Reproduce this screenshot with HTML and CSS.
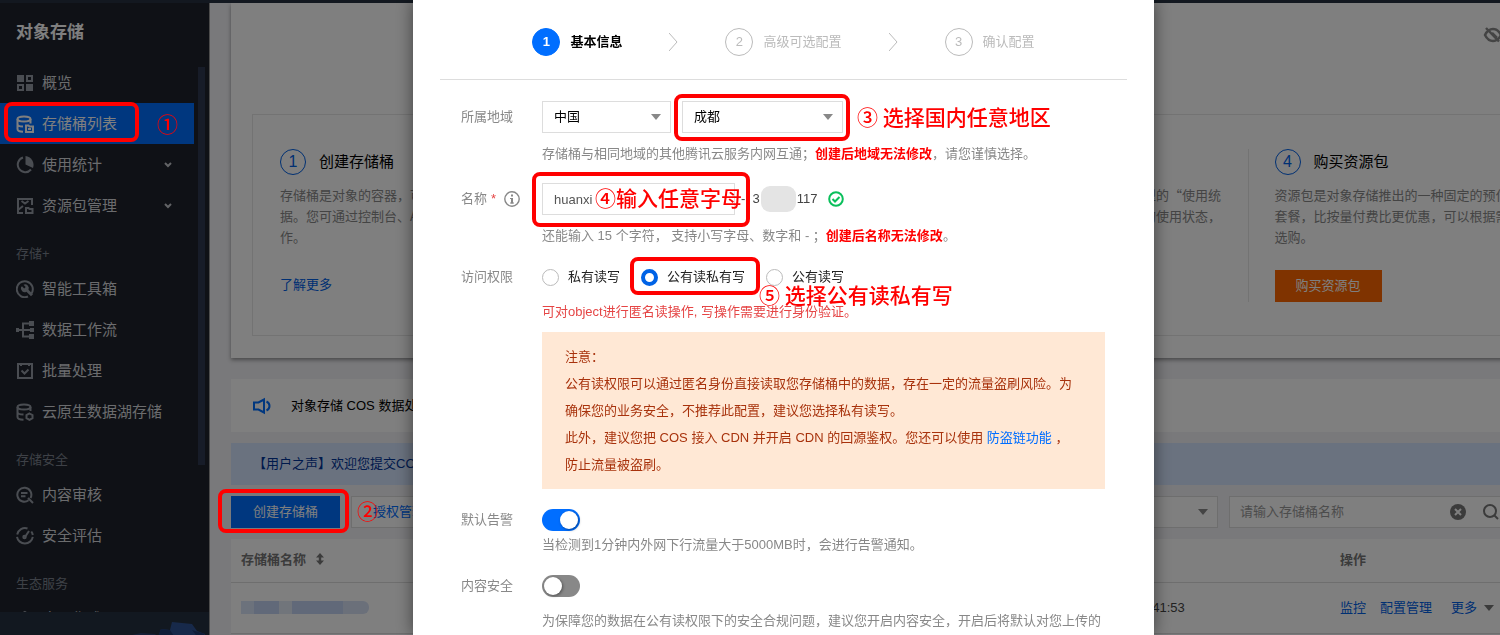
FILE: index.html
```html
<!DOCTYPE html>
<html lang="zh-CN">
<head>
	<meta charset="UTF-8">
	<title>对象存储</title>
	<link rel="stylesheet" href="styles.css">
</head>
<body>
	<div class="topbar"></div>
	<div class="layout">
		<nav class="sidebar">
			<h1 class="sidebar-title">对象存储</h1>
			<div class="sidebar-scroll"></div>
			<ul class="menu">
				<li><a class="menu-item" href="#">
					<svg class="icon" viewBox="0 0 18 18"><path fill="currentColor" fill-rule="evenodd" d="M1 1h7v7H1zM10 1h7v7h-7zM12 3v3h3V3zM1 10h7v7H1zM3 12v3h3v-3zM10 10h7v7h-7z"/></svg>
					概览</a></li>
				<li><a class="menu-item active" href="#">
					<svg class="icon" viewBox="0 0 18 18" fill="none" stroke="currentColor" stroke-width="2"><ellipse cx="8" cy="4" rx="6.5" ry="2.6"/><path d="M1.500 4v10c0 1.600 2 2.600 5.500 2.700M1.500 9c0 1.500 2 2.500 5.500 2.600M14.500 4v4.500M10 10.500h2.500l1 1h3.500v5.500h-7zM12 14h3"/></svg>
					存储桶列表</a></li>
				<li><a class="menu-item" href="#">
					<svg class="icon" viewBox="0 0 18 18"><path fill="none" stroke="currentColor" stroke-width="2" d="M7 1.500A7.500 7.500 0 1 0 15 13.500"/><path fill="currentColor" d="M9.500 0A9 9 0 0 1 17 12L9.500 8.500z"/></svg>
					使用统计<svg class="arrow" viewBox="0 0 8 6"><path d="M1 1l3 3 3-3"/></svg></a></li>
				<li><a class="menu-item" href="#">
					<svg class="icon" viewBox="0 0 18 18" fill="none" stroke="currentColor" stroke-width="2"><path d="M7 16H2V2h14v6M5.500 4l3.500 2.500L12.500 4M2 13l5-4M10 11h2.500l1 1H16.500V16H10z"/></svg>
					资源包管理<svg class="arrow" viewBox="0 0 8 6"><path d="M1 1l3 3 3-3"/></svg></a></li>
				<li class="menu-group">存储+</li>
				<li><a class="menu-item" href="#">
					<svg class="icon" viewBox="0 0 18 18"><path fill="none" stroke="currentColor" stroke-width="2" d="M15.500 13.500A8 8 0 1 0 12 16.500"/><path fill="currentColor" d="M6 6.200l2.200 2.200 1.500-1.500L7.500 4.700a3.800 3.800 0 0 1 5 5l4.500 4.500-2 2-4.600-4.400A3.800 3.800 0 0 1 5 7.300z"/></svg>
					智能工具箱</a></li>
				<li><a class="menu-item" href="#">
					<svg class="icon" viewBox="0 0 18 18"><path fill="none" stroke="currentColor" stroke-width="2" d="M1 9h15M14 2.500H7v13h7"/><path fill="currentColor" d="M0 7h3v4H0zM13 0h5v5h-5zM14 7h4v4h-4zM13 13h5v5h-5z"/></svg>
					数据工作流</a></li>
				<li><a class="menu-item" href="#">
					<svg class="icon" viewBox="0 0 18 18" fill="none" stroke="currentColor" stroke-width="2"><path d="M2 2h14v14H2zM5.500 8.500l3 3 4-4M5 2v2M13 2v2"/></svg>
					批量处理</a></li>
				<li><a class="menu-item" href="#">
					<svg class="icon" viewBox="0 0 18 18" fill="none" stroke="currentColor" stroke-width="2"><ellipse cx="8" cy="4" rx="6.500" ry="2.600"/><path d="M1.500 4v10c0 1.600 2 2.600 6 2.700M1.500 9c0 1.500 2 2.500 6 2.600M14.500 4v4"/><path d="M13.500 10.500l3 1.700v3l-3 1.700-3-1.700v-3z"/></svg>
					云原生数据湖存储</a></li>
				<li class="menu-group">存储安全</li>
				<li><a class="menu-item" href="#">
					<svg class="icon" viewBox="0 0 18 18" fill="none" stroke="currentColor" stroke-width="2"><path d="M12.500 14.300A7 7 0 1 1 14.500 12M12 12l5 5M5 7h6.500M5 10.200h4.500"/></svg>
					内容审核</a></li>
				<li><a class="menu-item" href="#">
					<svg class="icon" viewBox="0 0 18 18" fill="none" stroke="currentColor" stroke-width="2"><path d="M11.500 1.500A8 8 0 0 0 1.200 7.500M1 9.800a8 8 0 0 0 15.800 0M16.800 8a8 8 0 0 0-1.500-3.500"/><path d="M9 10l4-6"/><circle cx="8.500" cy="10" r="1.200"/></svg>
					安全评估</a></li>
				<li class="menu-group">生态服务</li>
				<li><a class="menu-item" href="#">
					<svg class="icon" viewBox="0 0 18 18" fill="none" stroke="currentColor" stroke-width="2"><path d="M9 2l7 4-7 4-7-4zM2 11l7 4 7-4"/></svg>
					应用集成</a></li>
			</ul>
			<div class="sidebar-promo">
				<svg viewBox="0 0 78 24"><path fill="#2c4170" d="M2 14l9-2 14 1 4 4H0z"/><path fill="#2f5394" d="M28 16l3-8 9 1 2-8 20 2 5 7 8 3-1 5z"/><path fill="#1f3a70" d="M31 8l9 1 6 9H27zM62 9l13 4-6 5z"/></svg>
			</div>
		</nav>

		<main class="main">
			<div class="content">
				<section class="guide">
					<svg class="eye" viewBox="0 0 20 16" fill="none" stroke="currentColor" stroke-width="2.500"><path d="M2 8c2-4 5-6 8-6s6 2 8 6c-2 4-5 6-8 6s-6-2-8-6z"/><path d="M9 6l5 5M3 1l13 13.500"/></svg>
					<div class="guide-steps">
						<div class="guide-step">
							<h3><i>1</i>创建存储桶</h3>
							<p>存储桶是对象的容器，可以存放任意数量数<br>据。您可通过控制台、API 等多种方式操<br>作。</p>
							<a class="link" href="#">了解更多</a>
						</div>
						<div class="guide-step">
							<h3><i>2</i>上传对象</h3>
							<p>您可将文件或文件夹上传到存储桶中。</p>
							<a class="link" href="#">了解更多</a>
						</div>
						<div class="guide-step">
							<h3><i>3</i>查看统计数据</h3>
							<p>对象存储 COS 控制台提供了多种类型的“使用统<br>计”功能，您可以随时了解到 COS 的使用状态，</p>
							<a class="link" href="#">了解更多</a>
						</div>
						<div class="guide-step">
							<h3><i>4</i>购买资源包</h3>
							<p>资源包是对象存储推出的一种固定的预付费<br>套餐，比按量付费比更优惠，可以根据需要<br>选购。</p>
							<button class="btn-buy" type="button">购买资源包</button>
						</div>
					</div>
				</section>

				<section class="news">
					<svg class="speaker" viewBox="0 0 18 16" fill="none" stroke="currentColor" stroke-width="2"><path d="M1 4.500h4.500L11 1.500v13l-5.500-3H1z"/><path d="M13.500 3.500c4 2 4 7 0 9"/></svg>
					对象存储 COS 数据处理能力全新升级
				</section>
				<section class="voice">【用户之声】欢迎您提交COS产品的意见与建议</section>

				<div class="toolbar">
					<button class="btn btn-primary" type="button">创建存储桶</button>
					<button class="btn" type="button">授权管理</button>
					<select class="select filter" aria-label="筛选条件"><option></option></select>
					<div class="search">
						<input type="text" placeholder="请输入存储桶名称" aria-label="请输入存储桶名称">
						<svg viewBox="0 0 16 16"><circle cx="8" cy="8" r="8" fill="currentColor"/><path d="M5 5l6 6M11 5l-6 6" stroke="#fff" stroke-width="2"/></svg>
						<svg viewBox="0 0 16 16" fill="none" stroke="currentColor" stroke-width="2"><circle cx="7" cy="7" r="6"/><path d="M11 11l4 4"/></svg>
					</div>
				</div>

				<table class="table">
					<thead>
						<tr>
							<th class="col-name">存储桶名称<svg class="sort" viewBox="0 0 8 12"><path fill="currentColor" d="M4 0l4 4.500H5.200v3H8L4 12 0 7.500h2.800v-3H0z"/></svg></th>
							<th class="col-region">所属地域</th>
							<th class="col-time">创建时间</th>
							<th>操作</th>
						</tr>
					</thead>
					<tbody>
						<tr>
							<td><span class="mask"></span></td>
							<td>成都</td>
							<td>2023-06-01 10:41:53</td>
							<td><div class="actions"><a class="link" href="#">监控</a><a class="link" href="#">配置管理</a><a class="link more" href="#">更多</a></div></td>
						</tr>
					</tbody>
				</table>
			</div>
		</main>
	</div>

	<div class="overlay">
		<div class="dialog" role="dialog" aria-label="创建存储桶">
			<ol class="steps">
				<li class="step current"><i>1</i>基本信息</li>
				<li class="step-arrow"><svg viewBox="0 0 9 18"><path d="M0 0l8 9-8 9"/></svg></li>
				<li class="step"><i>2</i>高级可选配置</li>
				<li class="step-arrow"><svg viewBox="0 0 9 18"><path d="M0 0l8 9-8 9"/></svg></li>
				<li class="step"><i>3</i>确认配置</li>
			</ol>

			<form class="form">
				<div class="form-row">
					<label class="form-label" for="area">所属地域</label>
					<div>
						<div class="controls region">
							<select class="select country" id="area"><option>中国</option></select>
							<select class="select city" aria-label="城市"><option>成都</option></select>
							<span class="mark mark-city"></span>
							<span class="note note-city">③ 选择国内任意地区</span>
						</div>
						<p class="help">存储桶与相同地域的其他腾讯云服务内网互通；<strong>创建后地域无法修改</strong>，请您谨慎选择。</p>
					</div>
				</div>

				<div class="form-row">
					<label class="form-label" for="name">名称 <em>*</em>
						<svg class="info" viewBox="0 0 16 16" fill="none" stroke="currentColor"><circle cx="8" cy="8" r="7.200" stroke-width="1.400"/><path stroke-width="2" d="M8 3.500v2M8 7v5.500"/><path d="M6 7.500h2M6 12h4"/></svg>
					</label>
					<div>
						<div class="controls name">
							<input class="input" id="name" type="text" value="huanxi">
							<span class="appid">- &nbsp;3<b></b>117</span>
							<svg class="ok" viewBox="0 0 16 16" fill="none" stroke="currentColor" stroke-width="2"><circle cx="8" cy="8" r="6.800"/><path d="M4.500 8l2.500 2.500 4.500-4.500"/></svg>
							<span class="mark mark-name"></span>
							<span class="note note-name">④输入任意字母</span>
						</div>
						<p class="help">还能输入 15 个字符， 支持小写字母、数字和 - ；<strong>创建后名称无法修改</strong>。</p>
					</div>
				</div>

				<div class="form-row compact">
					<span class="form-label" id="acl">访问权限</span>
					<div>
						<div class="controls radios" role="radiogroup" aria-labelledby="acl">
							<label><input type="radio" name="acl">私有读写</label>
							<label><input type="radio" name="acl" checked>公有读私有写</label>
							<label><input type="radio" name="acl">公有读写</label>
							<span class="mark mark-acl"></span>
							<span class="note note-acl">⑤ 选择公有读私有写</span>
						</div>
						<p class="error">可对object进行匿名读操作, 写操作需要进行身份验证。</p>
						<div class="notice">
							<p>注意：</p>
							<p>公有读权限可以通过匿名身份直接读取您存储桶中的数据，存在一定的流量盗刷风险。为确保您的业务安全，不推荐此配置，建议您选择私有读写。</p>
							<p>此外，建议您把 COS 接入 CDN 并开启 CDN 的回源鉴权。您还可以使用 <a href="#">防盗链功能</a> ，<br>防止流量被盗刷。</p>
						</div>
					</div>
				</div>

				<div class="form-row compact">
					<label class="form-label" for="alarm">默认告警</label>
					<div>
						<div class="controls"><input class="switch" id="alarm" type="checkbox" checked></div>
						<p class="help tight">当检测到1分钟内外网下行流量大于5000MB时，会进行告警通知。</p>
					</div>
				</div>

				<div class="form-row compact">
					<label class="form-label" for="safe">内容安全</label>
					<div>
						<div class="controls"><input class="switch" id="safe" type="checkbox"></div>
						<p class="help">为保障您的数据在公有读权限下的安全合规问题，建议您开启内容安全，开启后将默认对您上传的</p>
					</div>
				</div>
			</form>
		</div>
	</div>

	<!-- 操作步骤标注 -->
	<span class="mark mark-list"></span>
	<span class="note note-list">①</span>
	<span class="mark mark-create"></span>
	<span class="note note-create">②</span>
</body>
</html>
```
FILE: styles.css
```css
* {
	box-sizing: border-box;
}
body {
	margin: 0;
	height: 100vh;
	overflow: hidden;
	display: flex;
	flex-direction: column;
	position: relative;
	font: 13px/20px "Liberation Sans", "Noto Sans CJK SC", sans-serif;
	color: #000;
}
h1, h3, p, ul, ol {
	margin: 0;
	padding: 0;
}
li {
	list-style: none;
}
i, em {
	font-style: normal;
}
a {
	text-decoration: none;
}
input, select, button {
	font: inherit;
	color: inherit;
	margin: 0;
}
.link {
	color: #0060e6;
}
.topbar {
	flex: none;
	height: 3px;
	background: #263140;
}
.layout {
	flex: 1;
	min-height: 0;
	display: flex;
}

/* 左侧导航 */
.sidebar {
	position: relative;
	flex: none;
	width: 210px;
	overflow: hidden;
	background: #1e222c;
	border-right: 1px solid #999;
}
.sidebar-title {
	padding: 16px 16px 15px;
	font-size: 17px;
	line-height: 28px;
	color: #fff;
}
.sidebar-scroll {
	position: absolute;
	top: 64px;
	right: 4px;
	width: 7px;
	height: 398px;
	background: #2f3850;
}
.menu-item {
	display: flex;
	align-items: center;
	width: 194px;
	height: 41px;
	padding-left: 16px;
	font-size: 15px;
	color: #d6d8dc;
}
.icon {
	width: 18px;
	height: 18px;
	margin-right: 8px;
	color: #949aa4;
}
.arrow {
	width: 8px;
	height: 6px;
	margin-left: auto;
	margin-right: 22px;
	fill: none;
	stroke: #c4c7cc;
	stroke-width: 2;
}
.active,
.active .icon {
	color: #fff;
}
.active {
	background: #006eff;
}
.menu-group {
	height: 42px;
	padding: 18px 16px 0;
	color: #7c838e;
}
.sidebar-promo {
	position: absolute;
	left: 0;
	right: 0;
	bottom: 0;
	height: 23px;
	padding-left: 130px;
	background: #253040;
}
.sidebar-promo svg {
	display: block;
	width: 78px;
	height: 24px;
	margin-top: 9px;
}

/* 主体 */
.main {
	flex: 1;
	min-width: 0;
	overflow: hidden;
	padding-left: 21px;
	background: #f2f2f6;
}
.content {
	min-width: 1370px;
}
.guide {
	position: relative;
	padding: 111px 21px 22px;
	background: #fff;
	box-shadow: 0 2px 4px rgba(0, 0, 0, .4);
}
.eye {
	position: absolute;
	top: 24px;
	left: 1252px;
	width: 20px;
	height: 16px;
	color: #888;
}
.guide-steps {
	display: grid;
	grid-template-columns: repeat(4, 1fr);
	height: 222px;
	padding: 34px 0;
	border: 1px solid #e6e6e6;
}
.guide-step {
	padding-left: 26px;
	border-left: 1px solid #e6e6e6;
}
.guide-step:first-child {
	border-left-color: transparent;
}
.guide-step h3 {
	display: flex;
	align-items: center;
	gap: 13px;
	font-size: 15px;
	font-weight: 400;
}
.guide-step i {
	width: 26px;
	height: 26px;
	border: 1px solid #0060e6;
	border-radius: 50%;
	font-size: 16px;
	line-height: 24px;
	text-align: center;
	color: #0060e6;
}
.guide-step p {
	height: 64px;
	margin: 9px 0 27px;
	line-height: 21px;
	font-family: "Noto Sans CJK SC", sans-serif;
	white-space: nowrap;
	color: #888;
}
.btn-buy {
	display: block;
	height: 32px;
	margin-top: -5px;
	padding: 0 21px;
	border: 0;
	background: #ff6600;
	color: #fff;
}
.news {
	display: flex;
	align-items: center;
	height: 53px;
	margin-top: 21px;
	padding-left: 22px;
	background: #fff;
}
.speaker {
	width: 18px;
	height: 18px;
	margin-right: 20px;
	color: #006eff;
}
.voice {
	margin-top: 11px;
	padding: 11px 22px;
	background: #d5e5ff;
	color: #003499;
}
.toolbar {
	display: flex;
	gap: 11px;
	margin: 11px 0;
	padding-right: 82px;
}
.btn {
	height: 32px;
	padding: 0 21px;
	border: 1px solid #ddd;
	background: #fff;
	color: #006eff;
}
.btn-primary {
	border-color: #006eff;
	background: #006eff;
	color: #fff;
}
.select {
	appearance: none;
	height: 32px;
	padding: 0 11px;
	border: 1px solid #ddd;
	border-radius: 0;
	background: #fff url("data:image/svg+xml,%3Csvg xmlns='http://www.w3.org/2000/svg' width='10' height='6'%3E%3Cpath fill='%23888' d='M0 0h10L5 6z'/%3E%3C/svg%3E") no-repeat right 9px center;
}
.filter {
	width: 140px;
	margin-left: auto;
}
.search {
	display: flex;
	align-items: center;
	gap: 17px;
	width: 290px;
	padding: 0 19px 0 10px;
	border: 1px solid #ddd;
	background: #fff;
	color: #777;
}
.search input {
	flex: 1;
	min-width: 0;
	padding: 0;
	border: 0;
	outline: 0;
}
.search input::placeholder {
	color: #999;
}
.search svg {
	width: 16px;
	height: 16px;
}
.table {
	width: 100%;
	table-layout: fixed;
	border-collapse: collapse;
	background: #fff;
}
.table th,
.table td {
	padding: 0 10px;
	text-align: left;
	border-bottom: 1px solid #ddd;
	color: #444;
}
.table th {
	height: 43px;
	color: #777;
}
.table td {
	height: 51px;
}
.col-name {
	width: 411px;
}
.col-region {
	width: 412px;
}
.col-time {
	width: 276px;
}
.sort {
	width: 8px;
	height: 12px;
	margin-left: 10px;
	vertical-align: -1px;
}
.mask {
	display: block;
	width: 128px;
	height: 13px;
	border-radius: 0 6px 6px 0;
	background: linear-gradient(90deg, #d9e4f8 0 10%, #c3d2f2 10% 30%, #e3eaf7 30% 40%, #c3d2f2 40% 80%, #d6e0f5 80%);
}
.actions {
	display: flex;
	gap: 14px;
}
.more {
	display: flex;
	align-items: center;
	gap: 7px;
	margin-left: 5px;
}
.more::after {
	content: "";
	border: 5px solid transparent;
	border-top: 6px solid #777;
	border-bottom: 0;
}

/* 弹窗 */
.overlay {
	position: fixed;
	inset: 0;
	display: flex;
	justify-content: center;
	padding-left: 67px;
	background: rgba(0, 0, 0, .5);
}
.dialog {
	width: 741px;
	padding: 0 27px;
	background: #fff;
	box-shadow: 0 0 16px rgba(0, 0, 0, .5);
}
.steps {
	display: flex;
	justify-content: center;
	gap: 47px;
	padding: 28px 0 23px;
	border-bottom: 1px solid #ddd;
}
.step {
	display: flex;
	align-items: center;
	gap: 10px;
	color: #bbb;
}
.step i {
	width: 28px;
	height: 28px;
	border: 1px solid #bbb;
	border-radius: 50%;
	line-height: 26px;
	text-align: center;
}
.step-arrow {
	display: flex;
	align-items: center;
}
.step-arrow svg {
	width: 9px;
	height: 18px;
	fill: none;
	stroke: #bbb;
}
.current {
	font-weight: bold;
	color: #000;
}
.current i {
	border-color: #006eff;
	background: #006eff;
	color: #fff;
}
.form {
	display: flex;
	flex-direction: column;
	gap: 19px;
	padding: 21px 22px 0 21px;
}
.form-row {
	display: grid;
	grid-template-columns: 81px 1fr;
}
.form-label {
	display: flex;
	align-items: center;
	gap: 4px;
	height: 32px;
	color: #888;
}
.form-label em {
	color: #e54545;
}
.info {
	width: 16px;
	height: 16px;
	margin-left: 4px;
}
.controls {
	position: relative;
	display: flex;
	align-items: center;
	height: 32px;
}
.compact .form-label,
.compact .controls {
	height: 24px;
}
.region {
	gap: 11px;
}
.country {
	width: 129px;
}
.city {
	width: 161px;
}
.help {
	margin-top: 11px;
	white-space: nowrap;
	color: #888;
}
.help strong {
	color: #f00;
}
.compact .help {
	margin-top: 13px;
}
.compact .tight {
	margin-top: 3px;
}
.input {
	width: 193px;
	height: 32px;
	padding: 0 11px;
	border: 1px solid #ddd;
	color: #555;
}
.appid {
	display: flex;
	align-items: center;
	margin-left: 6px;
	color: #444;
}
.appid b {
	width: 35px;
	height: 26px;
	margin: 0 1px;
	border-radius: 9px;
	background: #e4e4e4;
}
.ok {
	width: 16px;
	height: 16px;
	margin-left: 10px;
	color: #0abf5b;
}
.radios {
	gap: 21px;
}
.radios label {
	display: flex;
	align-items: center;
	gap: 9px;
	color: #222;
}
.radios input {
	appearance: none;
	width: 17px;
	height: 17px;
	border: 1px solid #bbb;
	border-radius: 50%;
	background: #fff;
}
.radios input:checked {
	border: 4px solid #0063e6;
}
.error {
	margin-top: 13px;
	color: #e54545;
}
.notice {
	margin-top: 10px;
	padding: 11px 23px;
	line-height: 27px;
	background: #ffe8d5;
	color: #a8320c;
}
.notice a {
	color: #006eff;
}
.switch {
	appearance: none;
	width: 38px;
	height: 22px;
	border-radius: 11px;
	background: #888;
}
.switch::before {
	content: "";
	display: block;
	width: 18px;
	height: 18px;
	margin: 2px;
	border-radius: 50%;
	background: #fff;
	box-shadow: 1px 1px 3px rgba(0, 0, 0, .4);
}
.switch:checked {
	background: #006eff;
}
.switch:checked::before {
	margin-left: 18px;
}

/* 红色标注 */
.mark {
	position: absolute;
	border: 4px solid #f00;
	border-radius: 8px;
	pointer-events: none;
}
.note {
	position: absolute;
	font-family: "Noto Sans CJK SC", sans-serif;
	font-size: 21px;
	font-weight: 500;
	line-height: 24px;
	white-space: nowrap;
	color: #f00;
}
.mark-list {
	top: 102px;
	left: 4px;
	width: 135px;
	height: 40px;
}
.note-list {
	top: 111px;
	left: 157px;
}
.mark-create {
	top: 489px;
	left: 218px;
	width: 131px;
	height: 44px;
}
.note-create {
	top: 498px;
	left: 357px;
}
.mark-city {
	top: -7px;
	left: 132px;
	width: 176px;
	height: 47px;
}
.note-city {
	top: 3px;
	left: 315px;
}
.mark-name {
	top: -11px;
	left: -10px;
	width: 218px;
	height: 55px;
}
.note-name {
	top: 2px;
	left: 53px;
}
.mark-acl {
	top: -8px;
	left: 88px;
	width: 130px;
	height: 38px;
}
.note-acl {
	top: 17px;
	left: 217px;
}
```
